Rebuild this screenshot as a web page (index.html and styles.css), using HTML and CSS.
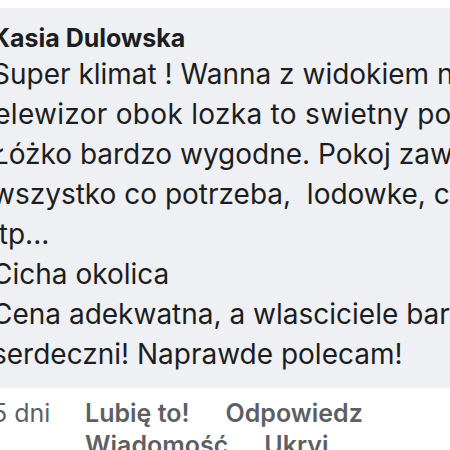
FILE: index.html
```html
<!DOCTYPE html>
<html lang="pl">
<head>
<meta charset="utf-8">
<link rel="stylesheet" href="styles.css">
</head>
<body>
<div class="page">
  <div class="bubble">
    <div class="name">Kasia Dulowska</div>
    <div class="text">
      <div class="line">Super klimat ! Wanna z widokiem na morze</div>
      <div class="line shifted">telewizor obok lozka to swietny pomysl</div>
      <div class="line">Łóżko bardzo wygodne. Pokoj zawsze czysty</div>
      <div class="line">wszystko co potrzeba,&nbsp; lodowke, czajnik</div>
      <div class="line">itp...</div>
      <div class="line">Cicha okolica</div>
      <div class="line">Cena adekwatna, a wlasciciele bardzo</div>
      <div class="line">serdeczni! Naprawde polecam!</div>
    </div>
  </div>
  <div class="actions">
    <span class="time">5 dni</span>
    <div class="links">
      <span class="link">Lubię to!</span>
      <span class="link">Odpowiedz</span>
      <span class="link">Wiadomość</span>
      <span class="link">Ukryj</span>
    </div>
  </div>
</div>
</body>
</html>
```

FILE: styles.css
```css
html, body {
  margin: 0;
  padding: 0;
  background: #ffffff;
  overflow: hidden;
  width: 450px;
  height: 450px;
}
.page {
  padding-top: 8px;
  margin-left: -8px;
  font-family: Inter, "Noto Sans", sans-serif;
}
.bubble {
  background: #eff0f4;
  padding: 15px 0 0 0;
  height: 365px;
  overflow: hidden;
  white-space: nowrap;
  color: #1c1d20;
}
.name {
  font-weight: 700;
  font-size: 25px;
  line-height: 31px;
}
.text {
  font-size: 28px;
  line-height: 40px;
}
.shifted {
  margin-left: -7px;
  letter-spacing: 0.3px;
}
.actions {
  display: flex;
  padding-top: 9px;
  color: #5e5f64;
  font-size: 25px;
  line-height: 32px;
  white-space: nowrap;
}
.time {
  width: 93px;
  flex: none;
}
.links {
  display: flex;
  flex-wrap: wrap;
  column-gap: 36px;
  width: 300px;
  font-weight: 600;
}
```
